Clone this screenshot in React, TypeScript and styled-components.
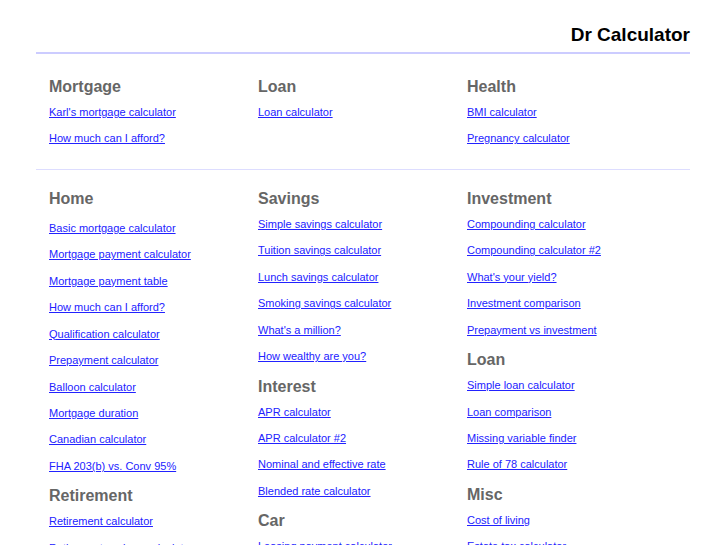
import React from 'react';
import styled, { createGlobalStyle } from 'styled-components';

const GlobalStyle = createGlobalStyle`
  html, body {
    margin    : 0;
    padding   : 0;
    background: #ffffff;
  }
  body {
    font-family: 'Liberation Sans', Arial, Helvetica, sans-serif;
  }
`;

const Page = styled.div`
  margin: 0 37px 0 36px;
`;

const Header = styled.header`
  padding-top   : 24px;
  padding-bottom: 6px;
  border-bottom : 2px solid #ccccff;
  text-align    : right;
`;

const Title = styled.h1`
  margin     : 0;
  font-size  : 19px;
  line-height: 22px;
  font-weight: bold;
  color      : #000000;
`;

const Section = styled.section<{ $top: number; $divider?: boolean }>`
  display              : grid;
  grid-template-columns: repeat(3, 1fr);
  padding              : ${p => p.$top}px 14px 17px 13px;
  border-bottom        : ${p => (p.$divider ? '1px solid #ddddff' : 'none')};
`;

const Column = styled.div`
  display       : flex;
  flex-direction: column;
`;

const Heading = styled.h2`
  margin     : 7px 0 2px 0;
  font-size  : 16px;
  line-height: 20px;
  font-weight: bold;
  color      : #666666;
  &:first-child {
    margin-top: 0;
  }
`;

const LinkList = styled.ul<{ $offset?: number }>`
  list-style-type: none;
  margin         : ${p => p.$offset || 0}px 0 0 0;
  padding        : 0;
`;

const Item = styled.li`
  height     : 26.45px;
  line-height: 26.45px;
  font-size  : 11px;
  white-space: nowrap;
`;

const Link = styled.a`
  color          : #2222ff;
  text-decoration: underline;
  cursor         : pointer;
`;

type Group = {
  title: string;
  links: string[];
  offset?: number;
};

const top: Group[][] = [
  [{ title: 'Mortgage', links: ["Karl's mortgage calculator", 'How much can I afford?'] }],
  [{ title: 'Loan', links: ['Loan calculator'] }],
  [{ title: 'Health', links: ['BMI calculator', 'Pregnancy calculator'] }],
];

const bottom: Group[][] = [
  [
    {
      title: 'Home',
      offset: 4,
      links: [
        'Basic mortgage calculator',
        'Mortgage payment calculator',
        'Mortgage payment table',
        'How much can I afford?',
        'Qualification calculator',
        'Prepayment calculator',
        'Balloon calculator',
        'Mortgage duration',
        'Canadian calculator',
        'FHA 203(b) vs. Conv 95%',
      ],
    },
    { title: 'Retirement', links: ['Retirement calculator', 'Retirement savings calculator', 'Social security estimator'] },
  ],
  [
    {
      title: 'Savings',
      links: [
        'Simple savings calculator',
        'Tuition savings calculator',
        'Lunch savings calculator',
        'Smoking savings calculator',
        "What's a million?",
        'How wealthy are you?',
      ],
    },
    {
      title: 'Interest',
      links: ['APR calculator', 'APR calculator #2', 'Nominal and effective rate', 'Blended rate calculator'],
    },
    { title: 'Car', links: ['Leasing payment calculator', 'Auto loan calculator'] },
  ],
  [
    {
      title: 'Investment',
      links: [
        'Compounding calculator',
        'Compounding calculator #2',
        "What's your yield?",
        'Investment comparison',
        'Prepayment vs investment',
      ],
    },
    {
      title: 'Loan',
      links: ['Simple loan calculator', 'Loan comparison', 'Missing variable finder', 'Rule of 78 calculator'],
    },
    { title: 'Misc', links: ['Cost of living', 'Estate tax calculator', 'Tip calculator'] },
  ],
];

const renderColumn = (groups: Group[], i: number) => (
  <Column key={i}>
    {groups.map(g => (
      <React.Fragment key={g.title}>
        <Heading>{g.title}</Heading>
        <LinkList $offset={g.offset}>
          {g.links.map(l => (
            <Item key={l}>
              <Link>{l}</Link>
            </Item>
          ))}
        </LinkList>
      </React.Fragment>
    ))}
  </Column>
);

const App = () => {
  return (
    <Page>
      <GlobalStyle />
      <Header>
        <Title>Dr Calculator</Title>
      </Header>
      <Section $top={23} $divider>
        {top.map(renderColumn)}
      </Section>
      <Section $top={19}>
        {bottom.map(renderColumn)}
      </Section>
    </Page>
  );
};

export default App;
